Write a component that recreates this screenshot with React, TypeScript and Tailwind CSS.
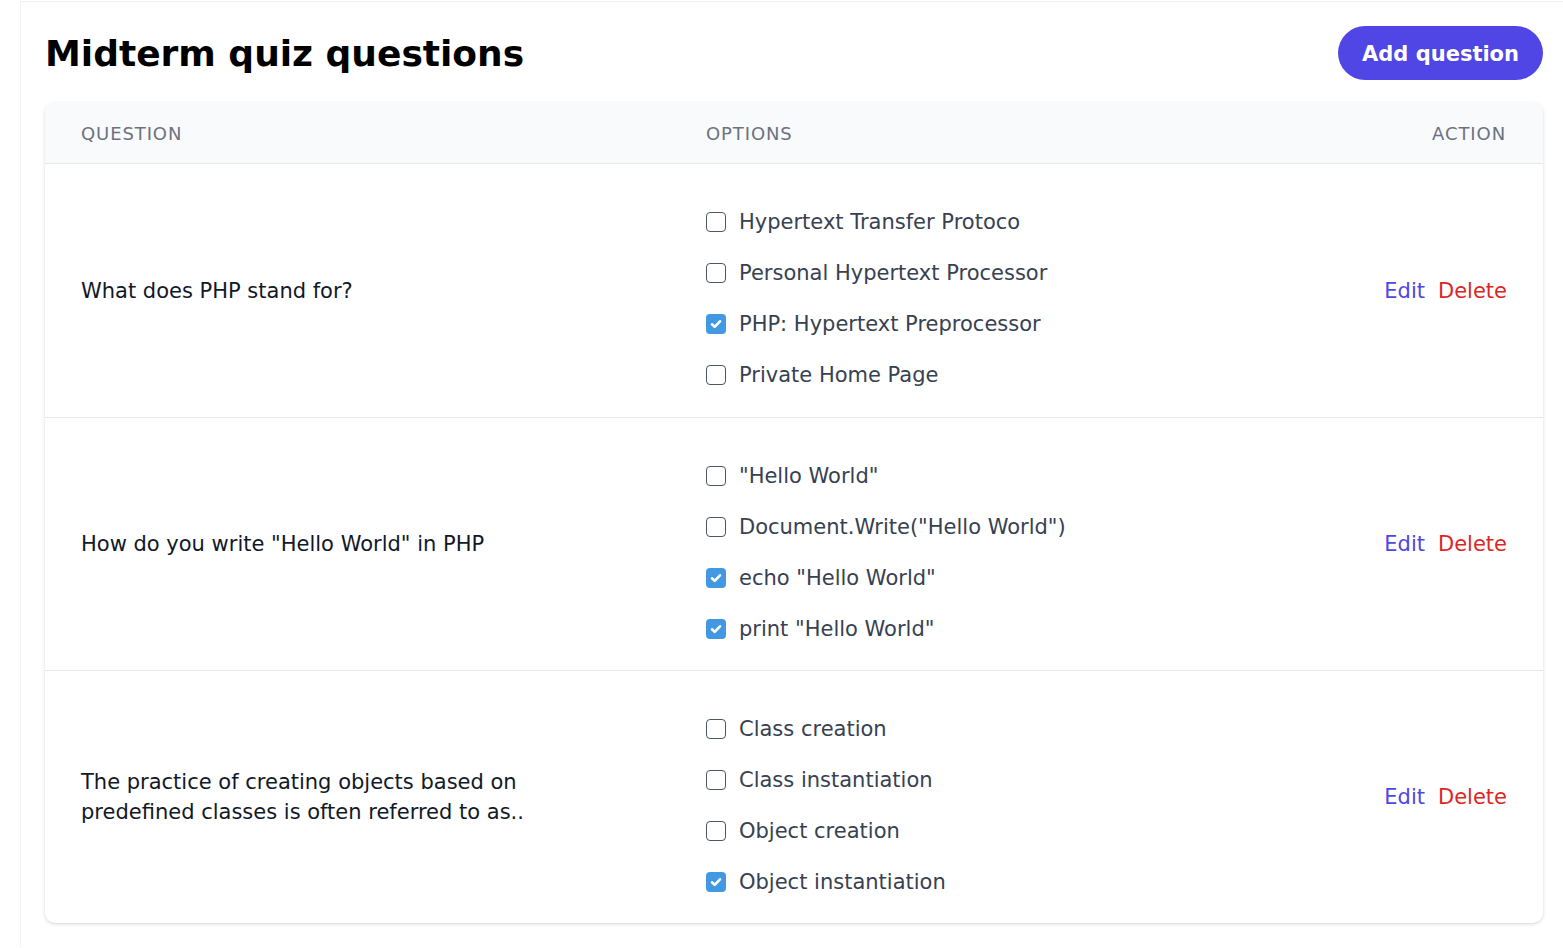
import type { ReactNode } from 'react'

type Option = { label: string; checked: boolean }
type Question = { text: string; options: Option[] }

const questions: Question[] = [
  {
    text: 'What does PHP stand for?',
    options: [
      { label: 'Hypertext Transfer Protoco', checked: false },
      { label: 'Personal Hypertext Processor', checked: false },
      { label: 'PHP: Hypertext Preprocessor', checked: true },
      { label: 'Private Home Page', checked: false },
    ],
  },
  {
    text: 'How do you write "Hello World" in PHP',
    options: [
      { label: '"Hello World"', checked: false },
      { label: 'Document.Write("Hello World")', checked: false },
      { label: 'echo "Hello World"', checked: true },
      { label: 'print "Hello World"', checked: true },
    ],
  },
  {
    text: 'The practice of creating objects based on predefined classes is often referred to as..',
    options: [
      { label: 'Class creation', checked: false },
      { label: 'Class instantiation', checked: false },
      { label: 'Object creation', checked: false },
      { label: 'Object instantiation', checked: true },
    ],
  },
]

function Checkbox({ checked }: { checked: boolean }) {
  if (checked) {
    return (
      <span className="flex h-[20px] w-[20px] flex-shrink-0 items-center justify-center rounded-[4px] bg-[#4299e1]">
        <svg viewBox="0 0 20 20" className="h-[20px] w-[20px]" fill="none">
          <path d="M6 10.3l2.7 2.6 5.3-5.6" stroke="white" strokeWidth="2.6" strokeLinecap="round" strokeLinejoin="round" />
        </svg>
      </span>
    )
  }
  return <span className="h-[20px] w-[20px] flex-shrink-0 rounded-[4px] border-[1.5px] border-[#4b5563] bg-white" />
}

function HeadCell({ children, right }: { children: ReactNode; right?: boolean }) {
  return (
    <div className={`px-[36px] text-[18px] uppercase tracking-wider text-[#6b7280] ${right ? 'pr-[37px] text-right' : ''}`}>
      {children}
    </div>
  )
}

export default function App() {
  return (
    <div className="min-h-screen bg-white" style={{ fontFamily: '"DejaVu Sans", sans-serif' }}>
      <div className="ml-[20px] mt-[1px] border-l border-t border-[#f1f2f4] pb-[24px] pl-[24px] pr-[20px] pt-[24px]">
        {/* Header */}
        <div className="mb-[23px] flex h-[54px] items-center justify-between">
          <h1 className="h-[54px] pt-[2px] text-[36px] font-bold leading-[52px] text-black">Midterm quiz questions</h1>
          <button className="h-[54px] rounded-full bg-[#4f46e5] px-[24px] pt-[3px] text-[21px] font-bold text-white">
            Add question
          </button>
        </div>

        {/* Table card */}
        <div className="overflow-hidden rounded-[10px] bg-white shadow-[0_1px_4px_rgba(0,0,0,0.12),0_1px_2px_rgba(0,0,0,0.06)]">
          <div className="grid h-[61px] grid-cols-[625px_1fr_auto] items-center border-b border-[#e5e7eb] bg-[#f9fafb]">
            <HeadCell>Question</HeadCell>
            <HeadCell>Options</HeadCell>
            <HeadCell right>Action</HeadCell>
          </div>

          {questions.map((q, i) => (
            <div
              key={i}
              className={`grid h-[253px] grid-cols-[625px_1fr_auto] items-center ${i > 0 ? 'border-t border-[#e5e7eb]' : ''}`}
            >
              <div className="pl-[36px] pr-[90px] text-[21px] leading-[30px] text-[#111827]">{q.text}</div>
              <div className="flex flex-col gap-[21px] px-[36px] pb-[11px] pt-[27px]">
                {q.options.map((o) => (
                  <label key={o.label} className="flex h-[30px] items-center gap-[13px] text-[21px] leading-[30px] text-[#374151]">
                    <Checkbox checked={o.checked} />
                    <span>{o.label}</span>
                  </label>
                ))}
              </div>
              <div className="flex gap-[13px] pr-[36px] text-[21px] leading-[30px]">
                <a className="text-[#4f46e5]">Edit</a>
                <a className="text-[#dc2626]">Delete</a>
              </div>
            </div>
          ))}
        </div>
      </div>
    </div>
  )
}
